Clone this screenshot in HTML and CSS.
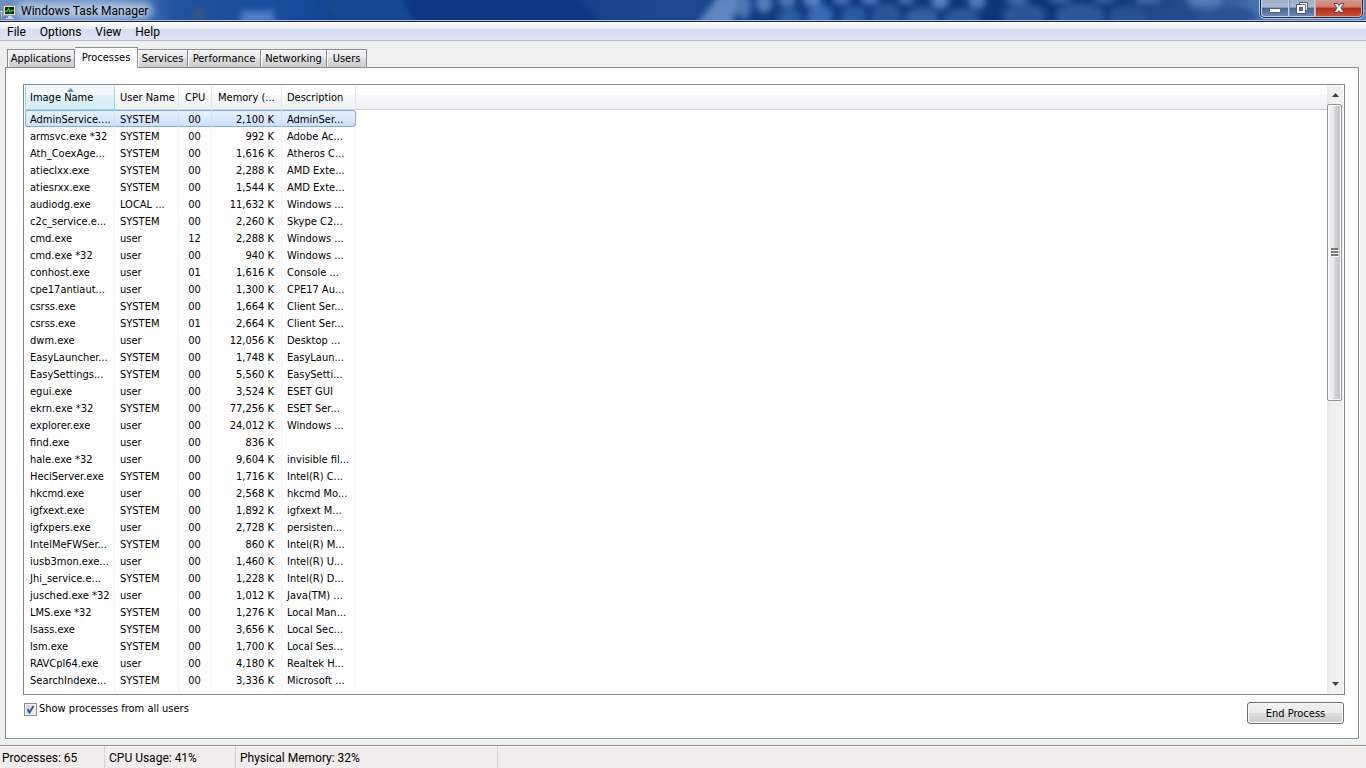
FILE: index.html
```html
<!DOCTYPE html>
<html lang="en">
<head>
<meta charset="utf-8">
<title>Windows Task Manager</title>
<link rel="stylesheet" href="styles.css">
</head>
<body>
<div class="window">
  <header class="titlebar">
    <svg class="titlebar-glass" viewBox="0 0 1366 20" preserveAspectRatio="none" aria-hidden="true">
      <defs>
        <linearGradient id="glass" x1="0" x2="1" y1="0" y2="0">
          <stop offset="0" stop-color="#6c8dbd"/>
          <stop offset="0.08" stop-color="#5f86bf"/>
          <stop offset="0.13" stop-color="#1f529f"/>
          <stop offset="0.22" stop-color="#164b9c"/>
          <stop offset="0.26" stop-color="#0e4189"/>
          <stop offset="0.38" stop-color="#0a3a82"/>
          <stop offset="0.42" stop-color="#164388"/>
          <stop offset="0.5" stop-color="#1c4b90"/>
          <stop offset="0.56" stop-color="#0f3b80"/>
          <stop offset="0.8" stop-color="#0a3478"/>
          <stop offset="0.88" stop-color="#2a5090"/>
          <stop offset="0.92" stop-color="#4a70ad"/>
          <stop offset="1" stop-color="#5f82b8"/>
        </linearGradient>
        <filter id="soft" x="-20%" y="-100%" width="140%" height="300%"><feGaussianBlur stdDeviation="3"/></filter>
        <filter id="haze" x="-20%" y="-100%" width="140%" height="300%"><feGaussianBlur stdDeviation="5"/></filter>
      </defs>
      <rect width="1366" height="20" fill="url(#glass)"/>
      <g filter="url(#soft)">
        <path d="M318 -9H402L422 29H343Z" fill="#17498f"/>
        <path d="M398 -9H576L604 29H418Z" fill="#083980"/>
        <rect x="241" y="11" width="33" height="12" fill="#527fc9"/>
        <ellipse cx="198" cy="14" rx="6" ry="7" fill="#3c5280"/>
        <path d="M695 26L720 -6H745L730 26Z" fill="#5e86bf"/>
        <ellipse cx="744" cy="6" rx="7" ry="13" fill="#4b76b5"/>
        <ellipse cx="764" cy="3" rx="8" ry="10" fill="#5580bd"/>
        <ellipse cx="787" cy="0" rx="9" ry="7" fill="#4d78b8"/>
        <ellipse cx="812" cy="0" rx="9" ry="6" fill="#5b88c9"/>
        <ellipse cx="842" cy="0" rx="9" ry="5" fill="#4a77b7"/>
        <ellipse cx="870" cy="0" rx="9" ry="5" fill="#4a79bd"/>
        <ellipse cx="906" cy="0" rx="9" ry="4" fill="#4674b8"/>
        <ellipse cx="940" cy="1" rx="9" ry="8" fill="#5583c5"/>
        <ellipse cx="977" cy="1" rx="9" ry="8" fill="#4e7cbe"/>
        <ellipse cx="1017" cy="0" rx="12" ry="4" fill="#4370b2"/>
        <ellipse cx="1060" cy="0" rx="12" ry="3" fill="#4370b2"/>
        <ellipse cx="1104" cy="0" rx="12" ry="3" fill="#3f6cae"/>
        <ellipse cx="1148" cy="0" rx="13" ry="4" fill="#426dae"/>
        <ellipse cx="1205" cy="0" rx="18" ry="8" fill="#547bb6"/>
        <ellipse cx="790" cy="18" rx="12" ry="10" fill="#2c5b9f"/>
        <ellipse cx="820" cy="17" rx="13" ry="13" fill="#386bb2"/>
        <ellipse cx="854" cy="18" rx="13" ry="12" fill="#2c5c9f"/>
        <ellipse cx="886" cy="16" rx="15" ry="13" fill="#285698"/>
        <ellipse cx="922" cy="19" rx="17" ry="12" fill="#315f9f"/>
        <ellipse cx="962" cy="19" rx="18" ry="11" fill="#2c599b"/>
        <ellipse cx="1024" cy="16" rx="22" ry="12" fill="#2a5797"/>
        <ellipse cx="1080" cy="16" rx="25" ry="13" fill="#2c5999"/>
        <ellipse cx="1128" cy="18" rx="20" ry="12" fill="#275291"/>
        <ellipse cx="1170" cy="18" rx="25" ry="12" fill="#204a8b"/>
        <ellipse cx="1230" cy="18" rx="26" ry="12" fill="#2a5292"/>
      </g>
      <rect x="16" y="3" width="136" height="15" rx="7" fill="#b9cbe4" filter="url(#haze)"/>
    </svg>
    <div class="titlebar-caption">
      <svg class="app-icon" width="16" height="18" viewBox="0 0 16 18" aria-hidden="true">
        <path d="M1.500 8V16M0 9.500H3" stroke="#b9c4a6" fill="none"/>
        <rect x="3.500" y="3.500" width="12" height="10" fill="#dcdcd6" stroke="#9a9d9a"/>
        <rect x="5" y="5" width="9" height="7" fill="#10251a"/>
        <path d="M5 9.500H7L8.500 6.500L10 10L11.500 8.500H14" stroke="#27c13c" stroke-width="1.300" fill="none"/>
        <path d="M8 14h4v2h2v1H6v-1h2z" fill="#d0d2ce"/>
      </svg>
      <h1 class="title">Windows Task Manager</h1>
    </div>
    <div class="window-controls">
      <button class="control" aria-label="Minimize"><svg width="14" height="14" viewBox="0 0 14 14"><rect x="1.500" y="7.500" width="11" height="4" rx="1" fill="#f4f4f4" stroke="#53586a"/></svg></button>
      <button class="control" aria-label="Restore"><svg width="14" height="14" viewBox="0 0 14 14"><path d="M4.500 1.500H12.500V9.500H10.500V12.500H1.500V3.500H4.500Z" fill="#f4f4f4" stroke="#53586a"/><path d="M4.500 3.500H10.500V9.500" fill="none" stroke="#53586a" stroke-width=".8"/><rect x="4.500" y="6.500" width="3" height="3" fill="#56719c" stroke="#53586a"/></svg></button>
      <button class="control control-close" aria-label="Close"><svg width="14" height="14" viewBox="0 0 14 14"><path d="M2 2.500H5.500L7 4.500L8.500 2.500H12L9 7L12 11.500H8.500L7 9.500L5.500 11.500H2L5 7Z" fill="#f6f6f6" stroke="#5a4350"/></svg></button>
    </div>
  </header>

  <nav class="menubar">
    <button class="menu">File</button>
    <button class="menu">Options</button>
    <button class="menu">View</button>
    <button class="menu">Help</button>
  </nav>

  <main class="content">
    <div class="tabs" role="tablist">
      <button class="tab tab-applications" role="tab">Applications</button>
      <button class="tab tab-processes active" role="tab" aria-selected="true">Processes</button>
      <button class="tab tab-services" role="tab">Services</button>
      <button class="tab tab-performance" role="tab">Performance</button>
      <button class="tab tab-networking" role="tab">Networking</button>
      <button class="tab tab-users" role="tab">Users</button>
    </div>
    <section class="panel" role="tabpanel">
      <div class="list">
        <div class="list-view">
          <table class="processes">
            <colgroup><col class="col-image"><col class="col-user"><col class="col-cpu"><col class="col-memory"><col class="col-description"><col></colgroup>
            <thead>
              <tr><th class="sorted" aria-sort="ascending">Image Name<svg class="sort-arrow" width="7" height="4" viewBox="0 0 7 4" aria-hidden="true"><path d="M0 4L3.500 0L7 4Z" fill="#5a93b3"/></svg></th><th>User Name</th><th class="cpu">CPU</th><th class="memory">Memory (...</th><th>Description</th><th class="rest"></th></tr>
            </thead>
            <tbody>
              <tr class="selected"><td>AdminService....</td><td>SYSTEM</td><td>00</td><td>2,100 K</td><td>AdminSer...</td></tr>
              <tr><td>armsvc.exe *32</td><td>SYSTEM</td><td>00</td><td>992 K</td><td>Adobe Ac...</td></tr>
              <tr><td>Ath_CoexAge...</td><td>SYSTEM</td><td>00</td><td>1,616 K</td><td>Atheros C...</td></tr>
              <tr><td>atieclxx.exe</td><td>SYSTEM</td><td>00</td><td>2,288 K</td><td>AMD Exte...</td></tr>
              <tr><td>atiesrxx.exe</td><td>SYSTEM</td><td>00</td><td>1,544 K</td><td>AMD Exte...</td></tr>
              <tr><td>audiodg.exe</td><td>LOCAL ...</td><td>00</td><td>11,632 K</td><td>Windows ...</td></tr>
              <tr><td>c2c_service.e...</td><td>SYSTEM</td><td>00</td><td>2,260 K</td><td>Skype C2...</td></tr>
              <tr><td>cmd.exe</td><td>user</td><td>12</td><td>2,288 K</td><td>Windows ...</td></tr>
              <tr><td>cmd.exe *32</td><td>user</td><td>00</td><td>940 K</td><td>Windows ...</td></tr>
              <tr><td>conhost.exe</td><td>user</td><td>01</td><td>1,616 K</td><td>Console ...</td></tr>
              <tr><td>cpe17antiaut...</td><td>user</td><td>00</td><td>1,300 K</td><td>CPE17 Au...</td></tr>
              <tr><td>csrss.exe</td><td>SYSTEM</td><td>00</td><td>1,664 K</td><td>Client Ser...</td></tr>
              <tr><td>csrss.exe</td><td>SYSTEM</td><td>01</td><td>2,664 K</td><td>Client Ser...</td></tr>
              <tr><td>dwm.exe</td><td>user</td><td>00</td><td>12,056 K</td><td>Desktop ...</td></tr>
              <tr><td>EasyLauncher...</td><td>SYSTEM</td><td>00</td><td>1,748 K</td><td>EasyLaun...</td></tr>
              <tr><td>EasySettings...</td><td>SYSTEM</td><td>00</td><td>5,560 K</td><td>EasySetti...</td></tr>
              <tr><td>egui.exe</td><td>user</td><td>00</td><td>3,524 K</td><td>ESET GUI</td></tr>
              <tr><td>ekrn.exe *32</td><td>SYSTEM</td><td>00</td><td>77,256 K</td><td>ESET Ser...</td></tr>
              <tr><td>explorer.exe</td><td>user</td><td>00</td><td>24,012 K</td><td>Windows ...</td></tr>
              <tr><td>find.exe</td><td>user</td><td>00</td><td>836 K</td><td></td></tr>
              <tr><td>hale.exe *32</td><td>user</td><td>00</td><td>9,604 K</td><td>invisible fil...</td></tr>
              <tr><td>HeciServer.exe</td><td>SYSTEM</td><td>00</td><td>1,716 K</td><td>Intel(R) C...</td></tr>
              <tr><td>hkcmd.exe</td><td>user</td><td>00</td><td>2,568 K</td><td>hkcmd Mo...</td></tr>
              <tr><td>igfxext.exe</td><td>SYSTEM</td><td>00</td><td>1,892 K</td><td>igfxext M...</td></tr>
              <tr><td>igfxpers.exe</td><td>user</td><td>00</td><td>2,728 K</td><td>persisten...</td></tr>
              <tr><td>IntelMeFWSer...</td><td>SYSTEM</td><td>00</td><td>860 K</td><td>Intel(R) M...</td></tr>
              <tr><td>iusb3mon.exe...</td><td>user</td><td>00</td><td>1,460 K</td><td>Intel(R) U...</td></tr>
              <tr><td>Jhi_service.e...</td><td>SYSTEM</td><td>00</td><td>1,228 K</td><td>Intel(R) D...</td></tr>
              <tr><td>jusched.exe *32</td><td>user</td><td>00</td><td>1,012 K</td><td>Java(TM) ...</td></tr>
              <tr><td>LMS.exe *32</td><td>SYSTEM</td><td>00</td><td>1,276 K</td><td>Local Man...</td></tr>
              <tr><td>lsass.exe</td><td>SYSTEM</td><td>00</td><td>3,656 K</td><td>Local Sec...</td></tr>
              <tr><td>lsm.exe</td><td>SYSTEM</td><td>00</td><td>1,700 K</td><td>Local Ses...</td></tr>
              <tr><td>RAVCpl64.exe</td><td>user</td><td>00</td><td>4,180 K</td><td>Realtek H...</td></tr>
              <tr><td>SearchIndexe...</td><td>SYSTEM</td><td>00</td><td>3,336 K</td><td>Microsoft ...</td></tr>
            </tbody>
            <tfoot><tr><td></td><td></td><td></td><td></td><td></td></tr></tfoot>
          </table>
        </div>
        <div class="scrollbar">
          <button class="scroll-button" aria-label="Scroll up"><svg width="7" height="4" viewBox="0 0 7 4"><path d="M0 4L3.500 0L7 4Z" fill="#404040"/></svg></button>
          <div class="scroll-track">
            <div class="scroll-thumb"><svg width="8" height="9" viewBox="0 0 8 9" aria-hidden="true"><path d="M0 1H7M0 4H7M0 7H7" stroke="#555" stroke-width="1.500"/><path d="M1 2.500H8M1 5.500H8M1 8.500H8" stroke="#fff"/></svg></div>
          </div>
          <button class="scroll-button" aria-label="Scroll down"><svg width="7" height="4" viewBox="0 0 7 4"><path d="M0 0L3.500 4L7 0Z" fill="#404040"/></svg></button>
        </div>
      </div>
      <div class="actions">
        <label class="show-all"><input class="checkbox" type="checkbox" checked><svg class="tick" width="13" height="13" viewBox="0 0 13 13" aria-hidden="true"><path d="M3.500 6L5.500 9.500L9.500 3" fill="none" stroke="#40589c" stroke-width="2"/></svg>Show processes from all users</label>
        <button class="end-process">End Process</button>
      </div>
    </section>
  </main>

  <footer class="statusbar">
    <div class="status status-processes">Processes: 65</div>
    <div class="status status-cpu">CPU Usage: 41%</div>
    <div class="status status-memory">Physical Memory: 32%</div>
  </footer>
</div>
</body>
</html>
```
FILE: styles.css
```css
* { box-sizing: border-box; }

body {
  margin: 0;
  background: #f0f0f0;
  color: #000;
  font: 11px/16px "DejaVu Sans Condensed", "DejaVu Sans", sans-serif;
}

button { margin: 0; padding: 0; font: inherit; color: inherit; }
svg { display: block; }

.window { display: flex; flex-direction: column; min-height: 100vh; }

/* Title bar */
.titlebar {
  position: relative;
  display: flex;
  justify-content: space-between;
  height: 22px;
  border-bottom: 1px solid #1b2a4c;
  background: #a9bcdc;
}
.titlebar-glass { position: absolute; inset: 0; width: 100%; height: 20px; }
.titlebar-caption { position: relative; display: flex; align-items: center; gap: 5px; }
.title { margin: 0; font: 12px/20px Roboto, sans-serif; }

.window-controls {
  position: relative;
  display: flex;
  height: 18px;
  margin-right: 3px;
  border: 1px solid #1f2c48;
  border-top: 0;
  border-radius: 0 0 5px 5px;
  box-shadow: 0 0 0 1px #b3c3de;
}
.control {
  display: grid;
  place-items: center;
  width: 28px;
  border: 1px solid #c3cee0;
  border-top: 0;
  border-radius: 0 0 0 4px;
  background: linear-gradient(#9fb1cc, #a9b8d0 45%, #46638f 50%, #6c87b1);
}
.control + .control { width: 26px; border-left-color: #8494b0; border-radius: 0; }
.control + .control-close {
  width: 47px;
  border-color: #d9a39b;
  border-radius: 0 0 4px 0;
  background: linear-gradient(#d09a92, #cf7a6c 45%, #b02a17 50%, #c6513a);
}

/* Menu bar */
.menubar {
  display: flex;
  gap: 14px;
  height: 19px;
  padding-left: 7px;
  border-bottom: 1px solid #b6bccc;
  background: linear-gradient(#fff, #e9edf5 37%, #d5dcef 38%, #e0e5f6);
}
.menu { border: 0; background: none; font: 12px/20px Roboto, sans-serif; }

/* Tabs */
.content { flex: 1; display: flex; flex-direction: column; padding: 6px 7px 6px 5px; }
.tabs { position: relative; display: flex; align-items: flex-end; height: 20px; padding-left: 2px; }
.tab {
  height: 18px;
  border: 1px solid #898c95;
  border-bottom: 0;
  border-left-width: 0;
  background: linear-gradient(#f3f3f3, #ebebeb 50%, #dddddd 50%, #cdcdcd);
  box-shadow: inset 1px 1px #fff;
  line-height: 18px;
}
.tab-applications { width: 68px; border-left-width: 1px; }
.tab-processes { width: 63px; }
.tab-services { width: 50px; }
.tab-performance { width: 73px; }
.tab-networking { width: 66px; }
.tab-users { width: 40px; }
.tab.active { z-index: 1; height: 21px; margin-bottom: -1px; background: #fff; }

.panel {
  flex: 1;
  display: flex;
  flex-direction: column;
  padding: 16px 13px 14px 17px;
  border: 1px solid #898c95;
  background: #fff;
  box-shadow: 1px 1px #fff;
}

/* Process list */
.list { flex: 1; display: flex; padding: 1px; border: 1px solid #828790; }
.list-view { flex: 1; min-width: 0; }
.processes { width: 100%; table-layout: fixed; border-collapse: separate; border-spacing: 0; }
.col-image { width: 90px; }
.col-user { width: 64px; }
.col-cpu { width: 33px; }
.col-memory { width: 70px; }
.col-description { width: 74px; }

.processes th {
  position: relative;
  height: 24px;
  padding: 4px 0 0 5px;
  border-right: 1px solid #e3e8ee;
  border-bottom: 1px solid #d5d5d5;
  background: linear-gradient(#fff 40%, #f7f8fa 41%, #f1f2f4);
  font-weight: normal;
  text-align: left;
  vertical-align: top;
  white-space: nowrap;
}
.processes .sorted {
  border-color: #96d9f9;
  box-shadow: inset 1px 0 #96d9f9;
  background: linear-gradient(#f2f9fc 40%, #e1f1f9 41%, #d8ecf6);
}
.processes .cpu { padding-left: 6px; }
.processes .memory { padding-left: 6px; }
.processes .rest { border-right: 0; }
.sort-arrow { position: absolute; top: 2px; left: 42px; }

.processes td {
  height: 17px;
  padding: 2px 0 0 5px;
  border-right: 1px solid #ebf4fe;
  line-height: 15px;
  white-space: nowrap;
}
.processes td:nth-child(3) { padding-right: 1px; padding-left: 0; text-align: center; }
.processes td:nth-child(4) { padding-right: 7px; text-align: right; }
.processes tfoot td { height: 4px; }
.processes .selected td {
  border-right-color: #cfe1f7;
  background: linear-gradient(#eaf2fe, #cbdffb);
  box-shadow: inset 0 1px #84acdd, inset 0 -1px #84acdd;
}
.processes .selected td:first-child { border-radius: 3px 0 0 3px; box-shadow: inset 1px 0 #84acdd, inset 0 1px #84acdd, inset 0 -1px #84acdd; }
.processes .selected td:last-child { border-right-color: #84acdd; border-radius: 0 3px 3px 0; }

/* Scroll bar */
.scrollbar { display: flex; flex-direction: column; width: 16px; background: linear-gradient(90deg, #e6e6e6, #f0f0f0 20%, #f0f0f0); }
.scroll-button { display: grid; place-items: center; height: 18px; border: 0; background: none; }
.scroll-track { flex: 1; }
.scroll-thumb {
  display: grid;
  place-items: center;
  width: 15px;
  height: 52%;
  border: 1px solid #979797;
  border-radius: 2px;
  background: linear-gradient(90deg, #f5f5f5, #e8e8eb 45%, #d2d2d6 55%, #c2c2c8);
  box-shadow: inset 0 0 0 1px #fafafa;
}

/* Actions under the list */
.actions { display: flex; justify-content: space-between; padding: 7px 1px 0; }
.show-all { position: relative; display: flex; align-items: center; gap: 2px; height: 14px; }
.checkbox {
  appearance: none;
  width: 13px;
  height: 13px;
  margin: 0;
  border: 1px solid #8e8f8f;
  background: linear-gradient(135deg, #cbcfd5, #f6f6f6);
  box-shadow: inset 0 0 0 1px #f4f4f4;
}
.tick { position: absolute; left: 0; visibility: hidden; pointer-events: none; }
.checkbox:checked + .tick { visibility: visible; }
.end-process {
  width: 97px;
  height: 22px;
  padding-top: 1px;
  border: 1px solid #707070;
  border-radius: 3px;
  background: linear-gradient(#f2f2f2, #ebebeb 50%, #dddddd 50%, #cfcfcf);
  box-shadow: inset 0 0 0 1px #fafafa;
}

/* Status bar */
.statusbar {
  display: flex;
  height: 23px;
  border-top: 1px solid #8b8f88;
  background: #f0edec;
  box-shadow: inset 0 1px #fff;
  font: 12px/24px Roboto, sans-serif;
}
.status { padding-left: 4px; border-right: 1px solid #d7d4d3; }
.status-processes { width: 105px; padding-left: 2px; }
.status-cpu { width: 131px; }
.status-memory { width: 262px; }
```
